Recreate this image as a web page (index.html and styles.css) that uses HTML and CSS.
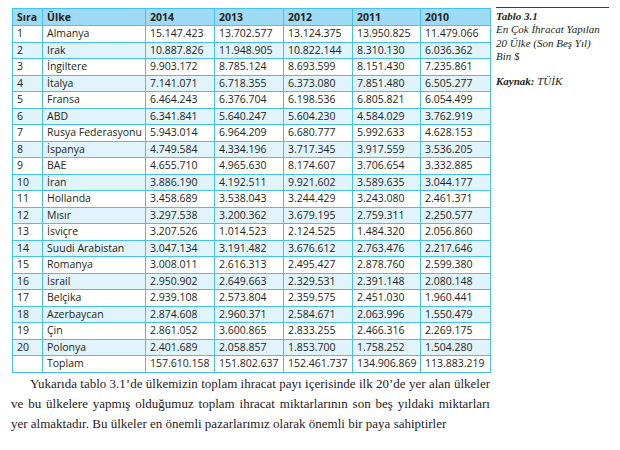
FILE: index.html
```html
<!DOCTYPE html>
<html lang="tr">
<head>
<meta charset="utf-8">
<link rel="stylesheet" href="styles.css">
</head>
<body>
<div class="top">
  <table class="data">
    <colgroup>
      <col class="c-sira"><col class="c-ulke"><col class="c-y"><col class="c-y"><col class="c-y"><col class="c-y11"><col class="c-y10">
    </colgroup>
    <thead>
      <tr><th>Sıra</th><th>Ülke</th><th>2014</th><th>2013</th><th>2012</th><th>2011</th><th>2010</th></tr>
    </thead>
    <tbody>
      <tr><td>1</td><td>Almanya</td><td>15.147.423</td><td>13.702.577</td><td>13.124.375</td><td>13.950.825</td><td>11.479.066</td></tr>
      <tr><td>2</td><td>Irak</td><td>10.887.826</td><td>11.948.905</td><td>10.822.144</td><td>8.310.130</td><td>6.036.362</td></tr>
      <tr><td>3</td><td>İngiltere</td><td>9.903.172</td><td>8.785.124</td><td>8.693.599</td><td>8.151.430</td><td>7.235.861</td></tr>
      <tr><td>4</td><td>İtalya</td><td>7.141.071</td><td>6.718.355</td><td>6.373.080</td><td>7.851.480</td><td>6.505.277</td></tr>
      <tr><td>5</td><td>Fransa</td><td>6.464.243</td><td>6.376.704</td><td>6.198.536</td><td>6.805.821</td><td>6.054.499</td></tr>
      <tr><td>6</td><td>ABD</td><td>6.341.841</td><td>5.640.247</td><td>5.604.230</td><td>4.584.029</td><td>3.762.919</td></tr>
      <tr><td>7</td><td>Rusya Federasyonu</td><td>5.943.014</td><td>6.964.209</td><td>6.680.777</td><td>5.992.633</td><td>4.628.153</td></tr>
      <tr><td>8</td><td>İspanya</td><td>4.749.584</td><td>4.334.196</td><td>3.717.345</td><td>3.917.559</td><td>3.536.205</td></tr>
      <tr><td>9</td><td>BAE</td><td>4.655.710</td><td>4.965.630</td><td>8.174.607</td><td>3.706.654</td><td>3.332.885</td></tr>
      <tr><td>10</td><td>İran</td><td>3.886.190</td><td>4.192.511</td><td>9.921.602</td><td>3.589.635</td><td>3.044.177</td></tr>
      <tr><td>11</td><td>Hollanda</td><td>3.458.689</td><td>3.538.043</td><td>3.244.429</td><td>3.243.080</td><td>2.461.371</td></tr>
      <tr><td>12</td><td>Mısır</td><td>3.297.538</td><td>3.200.362</td><td>3.679.195</td><td>2.759.311</td><td>2.250.577</td></tr>
      <tr><td>13</td><td>İsviçre</td><td>3.207.526</td><td>1.014.523</td><td>2.124.525</td><td>1.484.320</td><td>2.056.860</td></tr>
      <tr><td>14</td><td>Suudi Arabistan</td><td>3.047.134</td><td>3.191.482</td><td>3.676.612</td><td>2.763.476</td><td>2.217.646</td></tr>
      <tr><td>15</td><td>Romanya</td><td>3.008.011</td><td>2.616.313</td><td>2.495.427</td><td>2.878.760</td><td>2.599.380</td></tr>
      <tr><td>16</td><td>İsrail</td><td>2.950.902</td><td>2.649.663</td><td>2.329.531</td><td>2.391.148</td><td>2.080.148</td></tr>
      <tr><td>17</td><td>Belçika</td><td>2.939.108</td><td>2.573.804</td><td>2.359.575</td><td>2.451.030</td><td>1.960.441</td></tr>
      <tr><td>18</td><td>Azerbaycan</td><td>2.874.608</td><td>2.960.371</td><td>2.584.671</td><td>2.063.996</td><td>1.550.479</td></tr>
      <tr><td>19</td><td>Çin</td><td>2.861.052</td><td>3.600.865</td><td>2.833.255</td><td>2.466.316</td><td>2.269.175</td></tr>
      <tr><td>20</td><td>Polonya</td><td>2.401.689</td><td>2.058.857</td><td>1.853.700</td><td>1.758.252</td><td>1.504.280</td></tr>
      <tr><td></td><td>Toplam</td><td>157.610.158</td><td>151.802.637</td><td>152.461.737</td><td>134.906.869</td><td>113.883.219</td></tr>
    </tbody>
  </table>
  <aside class="caption">
    <div class="cap-title">Tablo 3.1</div>
    <div>En Çok İhracat Yapılan</div>
    <div>20 Ülke (Son Beş Yıl)</div>
    <div>Bin $</div>
    <div class="cap-source"><b>Kaynak:</b> TÜİK</div>
  </aside>
</div>
<p class="text"><span class="ln first">Yukarıda tablo 3.1’de ülkemizin toplam ihracat payı içerisinde ilk 20’de yer alan ülkeler</span> <span class="ln">ve bu ülkelere yapmış olduğumuz toplam ihracat miktarlarının son beş yıldaki miktarları</span> <span class="ln last">yer almaktadır. Bu ülkeler en önemli pazarlarımız olarak önemli bir paya sahiptirler</span></p>
</body>
</html>
```

FILE: styles.css
```css
html, body {
  margin: 0;
  padding: 0;
  background: #ffffff;
}

.top {
  display: flex;
  align-items: flex-start;
  padding: 7px 0 0 12px;
}

.data {
  border-collapse: collapse;
  table-layout: fixed;
  width: 479px;
  margin-top: 1px;
  font-family: "Open Sans", "Noto Sans", sans-serif;
  font-size: 10.5px;
  color: #231f20;
}

.c-sira { width: 30px; }
.c-ulke { width: 103px; }
.c-y { width: 69px; }
.c-y11 { width: 68px; }
.c-y10 { width: 70px; }

.data th,
.data td {
  border: 1px solid #45c1ee;
  padding: 0 0 0 4px;
  height: 15.5px;
  line-height: 15px;
  text-align: left;
  white-space: nowrap;
  overflow: hidden;
}

.data th {
  background: #9fdbf5;
  font-weight: 700;
  height: 16px;
}

.data tbody tr:nth-child(even) td {
  background: #e1f3fb;
}

.caption {
  margin-left: 5px;
  width: 113px;
  border-top: 1.5px solid #3a3a3a;
  padding-top: 2px;
  font-family: "Liberation Serif", "DejaVu Serif", serif;
  font-style: italic;
  font-size: 11px;
  line-height: 13.3px;
  color: #231f20;
}

.cap-title {
  font-weight: 700;
}

.cap-source {
  margin-top: 12px;
}

.text {
  margin: 1px 0 0 11px;
  width: 479px;
  font-family: "Liberation Serif", "DejaVu Serif", serif;
  font-size: 13px;
  line-height: 20px;
  color: #1f1b1c;
}

.ln {
  display: block;
  text-align: justify;
  text-align-last: justify;
}

.ln.first {
  padding-left: 19px;
}

.ln.last {
  text-align: left;
  text-align-last: left;
}
```
